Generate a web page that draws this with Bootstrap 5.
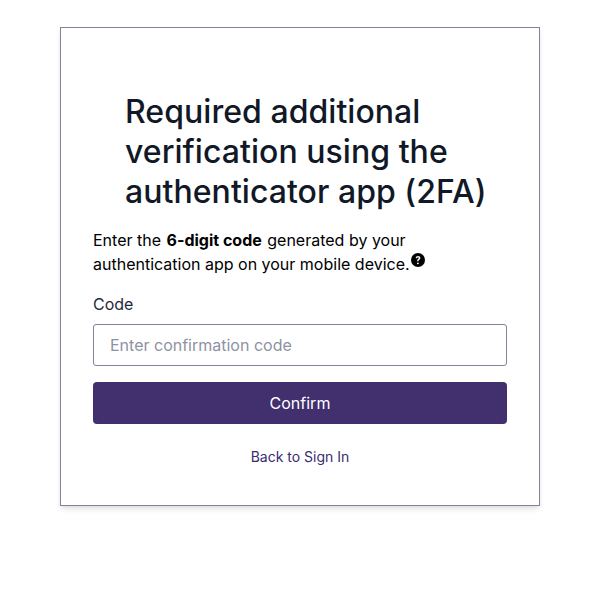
<!DOCTYPE html>
<html lang="en">
<head>
<meta charset="utf-8">
<title>Two-factor verification</title>
<link href="https://cdn.jsdelivr.net/npm/bootstrap@5.3.0/dist/css/bootstrap.min.css" rel="stylesheet">
<style>
html, body { background: #fff; font-family: Inter, "Liberation Sans", sans-serif; }
.auth-page { padding: 27px 74px 0 60px; }
.auth-card { width: 480px; height: 479px; border: 1px solid #7f8598; border-radius: 0; box-shadow: 0 4px 6px -1px rgba(0,0,0,.1), 0 2px 4px -1px rgba(0,0,0,.06); padding: 64px 32px 0; }
.auth-title { font-size: 32px; line-height: 40px; font-weight: 500; color: #111827; margin: 0 0 16px 32px; letter-spacing: .04px; }
.auth-text { font-size: 16px; line-height: 24px; color: #000; margin-bottom: 16px; }
.auth-text strong { font-weight: 700; margin: 0 1px; }
.help-glyph { width: 14px; height: 14px; vertical-align: 3px; margin-left: 1px; }
.auth-label { font-size: 16px; line-height: 24px; color: #1f2937; margin-bottom: 8px; }
.auth-input { height: 42px; border: 1px solid #7f8598; border-radius: 3px; padding: 0 16px; font-size: 16px; color: #111827; }
.auth-input::placeholder { color: #8e92a3; opacity: 1; }
.auth-btn { height: 42px; background: #412f6e; border: 0; border-radius: 4px; color: #fff; font-size: 16px; font-weight: 400; margin-top: 16px; }
.auth-btn:hover { background: #412f6e; color: #fff; }
.auth-back { font-size: 14px; line-height: 20px; margin-top: 23px; }
.auth-back a { color: #3a2c70; }
</style>
</head>
<body>
<main class="auth-page min-vh-100">
  <div class="card auth-card">
    <h1 class="auth-title">Required additional verification using the authenticator app (2FA)</h1>
    <p class="auth-text">Enter the <strong>6-digit code</strong> generated by your authentication app on your mobile device.<svg class="help-glyph" viewBox="0 0 16 16" aria-hidden="true"><circle cx="8" cy="8" r="8" fill="#000"/><path d="M5.4 6.1c0-1.6 1.2-2.6 2.7-2.6s2.6 1 2.6 2.2c0 1-.5 1.5-1.3 2.1-.6.4-.8.7-.8 1.3v.3H7v-.5c0-.9.3-1.4 1-1.9.6-.4.9-.7.9-1.2 0-.5-.4-.8-.9-.8-.6 0-1 .4-1 1.1z" fill="#fff"/><circle cx="7.9" cy="11.8" r="1.05" fill="#fff"/></svg></p>
    <form>
      <label class="form-label auth-label d-block" for="code">Code</label>
      <input id="code" type="text" class="form-control auth-input" placeholder="Enter confirmation code">
      <button type="button" class="btn w-100 d-block auth-btn">Confirm</button>
    </form>
    <div class="text-center auth-back"><a href="#" class="text-decoration-none">Back to Sign In</a></div>
  </div>
</main>
<script src="https://cdn.jsdelivr.net/npm/bootstrap@5.3.0/dist/js/bootstrap.bundle.min.js"></script>
</body>
</html>
